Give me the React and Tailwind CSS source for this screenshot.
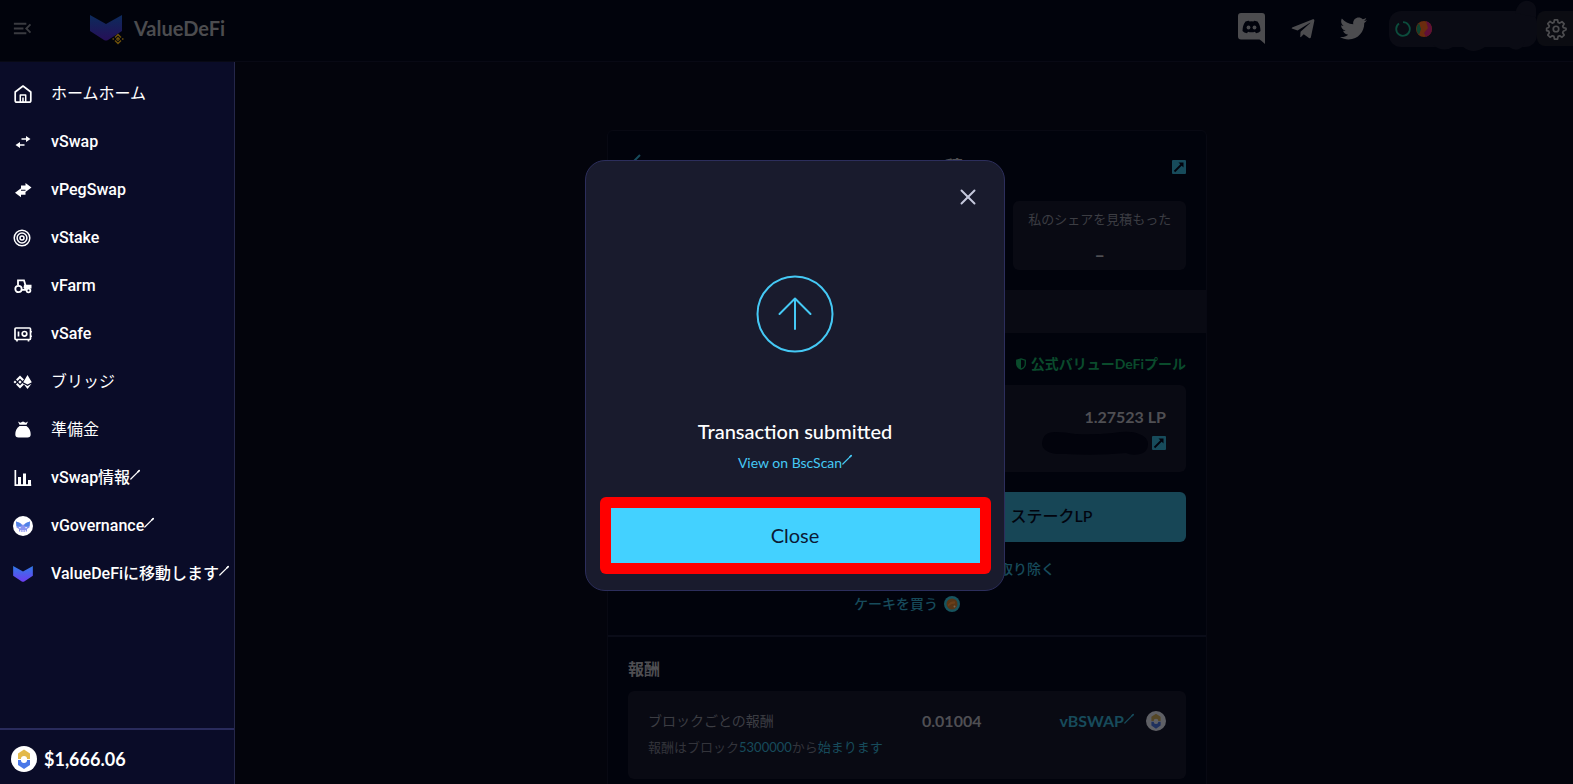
import React from 'react'
import { FaTelegramPlane, FaTwitter } from 'react-icons/fa'
import { MdMenuOpen } from 'react-icons/md'
import { X } from 'lucide-react'

const HomeIcon = () => (
  <svg viewBox="0 0 20 20" className="w-5 h-5" fill="none" stroke="currentColor" strokeWidth="1.700" strokeLinejoin="round">
    <path d="M4 18.200q-1.800 0-1.800-1.800V8L10 2l7.800 6v8.400q0 1.800-1.800 1.800z" />
    <path d="M7.300 18v-7h5.400v7M10 13.500V18" strokeWidth="1.500" />
  </svg>
)

const SwapIcon = () => (
  <svg viewBox="0 0 20 20" className="w-5 h-5" fill="currentColor">
    <path d="M8.500 6.300H13V4l4.500 3-4.500 3V7.800H8.500zM11.500 12.300H7V10l-4.500 3L7 16v-2.200h4.500z" />
  </svg>
)

const PegSwapIcon = () => (
  <svg viewBox="0 0 20 20" className="w-5 h-5" fill="currentColor">
    <path d="M8 5.500h4.500V3L18.500 7.500l-6 4.500V9.700H8zM12.500 10.800v4H8v2.500l-6-4.500 6-4.500v2.500z" />
  </svg>
)

const StakeIcon = () => (
  <svg viewBox="0 0 20 20" className="w-5 h-5" fill="none" stroke="currentColor" strokeWidth="1.500">
    <circle cx="9" cy="10" r="7.800" />
    <circle cx="9" cy="10" r="4.900" />
    <circle cx="9" cy="10" r="2" />
  </svg>
)

const FarmIcon = () => (
  <svg viewBox="0 0 20 20" className="w-5 h-5" fill="none" stroke="currentColor" strokeWidth="1.800">
    <circle cx="5.500" cy="13" r="3.200" />
    <circle cx="15.500" cy="14.500" r="1.900" />
    <path d="M5 9V4.300h6l1.500 5.200M9 13.800h4" />
    <path d="M11 8.800h7.500v3.700H14L12.500 14 10.500 12z" fill="currentColor" stroke="none" />
  </svg>
)

const SafeIcon = () => (
  <svg viewBox="0 0 20 20" className="w-5 h-5" fill="none" stroke="currentColor" strokeWidth="1.700">
    <rect x="2" y="4" width="15.500" height="11.500" rx="1" />
    <circle cx="11.500" cy="9.800" r="2.300" />
    <path d="M5.500 7.500v5M4 15.500v2M15.500 15.500v2M18 7v1.500M18 11.500v1.500" />
  </svg>
)

const BridgeIcon = () => (
  <svg viewBox="0 0 20 20" className="w-5 h-5" fill="currentColor">
    <path d="M7 3.500 11 7.500 9.500 9 7 6.500 4.500 9 3 7.500zM7 16.500l-4-4L4.500 11 7 13.500 9.500 11l1.500 1.500zM7 8.300 8.700 10 7 11.700 5.300 10zM2 8.500 3.500 10 2 11.500.5 10zM14.500 3l4.300 7.200-4.300 2.200-4.300-2.200zM10.500 11.800l4 2.100 4-2.100-4 5.200z" />
  </svg>
)

const BagIcon = () => (
  <svg viewBox="0 0 20 20" className="w-5 h-5" fill="currentColor">
    <path d="m5 1.500 2.300 1.200L10 1.500l2.700 1.200L15 1.500l-1.500 3.300h-7zM6.500 6h7c3 2 4.200 5.200 4.200 8.200 0 2.200-1 3.300-3.200 3.300h-9c-2.200 0-3.200-1.100-3.200-3.300C2.300 11.200 3.500 8 6.500 6z" />
  </svg>
)

const ChartIcon = () => (
  <svg viewBox="0 0 20 20" className="w-5 h-5" fill="currentColor">
    <path d="M1.500 2h1.700v14.300h15V18H1.500zM5 9h3v7.500H5zM10 5.500h3v11h-3zM15 12h3v5h-3z" />
  </svg>
)

const GovernanceIcon = () => (
  <svg viewBox="0 0 20 20" className="w-5 h-5">
    <circle cx="10" cy="10" r="10" fill="#fff" />
    <path d="M3 5.500 7 7l3 2 3-2 4-1.500-.5 6L14 13v2.500h-1.300V14h-1v2h-1.200v-2h-1v2H8.300v-2h-1v1.500H6V13l-2.500-1.500z" fill="#8a93f0" />
    <path d="m3 5.500 4 1.500 2 2.500-3 1.500-2.500-1zM17 5.500 13 7l-2 2.500 3 1.500 2.500-1z" fill="#4f83e6" />
    <path d="m5.500 10.500 2.500 1-1 1zM14.500 10.500l-2.500 1 1 1z" fill="#fff" />
  </svg>
)

const ValueLogo = ({ className, dim }) => (
  <svg viewBox="0 0 32 26" className={className}>
    <defs>
      <linearGradient id={dim ? 'logoDim' : 'logo'} x1="0" y1="0" x2="0" y2="1">
        <stop offset="0" stopColor={dim ? '#0c2b5c' : '#2f7be8'} />
        <stop offset="1" stopColor={dim ? '#260f57' : '#6d3df0'} />
      </linearGradient>
    </defs>
    <path d="M0 0 16 9 32 0v16L18 25q-2 1.200-4 0L0 16z" fill={dim ? 'url(#logoDim)' : 'url(#logo)'} />
  </svg>
)

const BnbBadge = () => (
  <svg viewBox="0 0 12 12" className="absolute left-[22px] top-[18px] w-3 h-3" fill="none" stroke="#6b4f0b" strokeWidth="1.500">
    <path d="M3 4.500 6 1.500l3 3M3 7.500l3 3 3-3M6 4.800 7.200 6 6 7.200 4.800 6zM.5 6h1.600M9.900 6h1.600" />
  </svg>
)

const DiscordIcon = () => (
  <svg viewBox="0 0 28 31" className="w-7 h-[31px]" fill="currentColor">
    <path d="M3 0h21q3 0 3 3v28l-4-3.500-1.500-1H3q-3 0-3-3V3q0-3 3-3z" />
    <path d="M7.500 8.500Q10 7.500 11 7.700l.5.700q2-.4 4 0l.5-.7q1 0 3.500.8 3 4 3 9.500-1.500 2-4.500 2.300l-1-1.500q-3.500 1-7 0l-1 1.500Q6 20 4.500 18q0-5.500 3-9.500z" fill="#01030c" />
    <circle cx="10.500" cy="14.500" r="1.900" />
    <circle cx="16.500" cy="14.500" r="1.900" />
  </svg>
)

const GearIcon = () => (
  <svg viewBox="0 0 24 24" className="w-[22px] h-[22px]" fill="none" stroke="currentColor" strokeWidth="1.900" strokeLinejoin="round">
    <circle cx="12" cy="12" r="3" />
    <path d="M10.300 2h3.400l.6 2.900 1.700.7 2.500-1.600 2.400 2.400-1.600 2.500.7 1.700 2.900.6v1.700l-2.900 1.500-.7 1.700 1.600 2.500-2.400 2.400-2.500-1.600-1.700.7-.6 2.900h-3.400l-.6-2.900-1.700-.7-2.500 1.600-2.400-2.400 1.600-2.500-.7-1.700L1.800 13.800v-2.600l2.200-.8.700-1.700-1.600-2.500 2.400-2.400L8 5.600l1.700-.7z" />
  </svg>
)

const CoinIcon = ({ className }) => (
  <svg viewBox="0 0 26 26" className={className}>
    <circle cx="13" cy="13" r="13" fill="#fff" />
    <path d="M7 7.500 13 3.500l6 4V13h-3a3 3 0 0 0-6 0H7z" fill="#e3b94a" />
    <path d="M7 14h3a3 3 0 0 0 6 0h3v5l-6 4-6-4z" fill="#4a78e8" />
    <circle cx="13" cy="13.500" r="2.800" fill="#fff" />
  </svg>
)

const CakeIcon = () => (
  <svg viewBox="0 0 16 16" className="w-4 h-4">
    <circle cx="8" cy="8" r="8" fill="#17545e" />
    <circle cx="8" cy="8" r="5.500" fill="#573516" />
    <path d="M4 8.500q3-4 7-3v2q-4 0-7 3z" fill="#6a3f1a" />
    <circle cx="10.500" cy="10.500" r="1" fill="#6f6353" />
  </svg>
)

const OpenBox = () => (
  <svg viewBox="0 0 14 14" className="w-[14px] h-[14px]">
    <rect width="14" height="14" rx="1" fill="#174b5b" />
    <path d="M2.500 11.500 9.500 4.500" stroke="#02030d" strokeWidth="1.800" />
    <path d="M6.500 2.500h5v5z" fill="#02030d" />
  </svg>
)

const Arrow = () => (
  <svg viewBox="0 0 10 12" className="inline-block w-[10px] h-3 align-[2px]" fill="none" stroke="currentColor" strokeLinecap="round">
    <path d="M.8 10 9 1.800" strokeWidth="1.200" />
    <path d="M8 2.800 9.200 1.600" strokeWidth="1.600" />
  </svg>
)

const links = [
  { name: 'ホームホーム', icon: <HomeIcon /> },
  { name: 'vSwap', icon: <SwapIcon /> },
  { name: 'vPegSwap', icon: <PegSwapIcon /> },
  { name: 'vStake', icon: <StakeIcon /> },
  { name: 'vFarm', icon: <FarmIcon /> },
  { name: 'vSafe', icon: <SafeIcon /> },
  { name: 'ブリッジ', icon: <BridgeIcon /> },
  { name: '準備金', icon: <BagIcon /> },
  { name: 'vSwap情報', icon: <ChartIcon />, external: true },
  { name: 'vGovernance', icon: <GovernanceIcon />, external: true },
  { name: 'ValueDeFiに移動します', icon: <ValueLogo className="w-5 h-4" />, external: true },
]

const Header = () => (
  <header className="h-[62px] shrink-0 flex items-center justify-between border-b border-[#080914] bg-[#01030c] pb-1 text-[#4c4c4f]">
    <div className="flex items-center pl-[11px]">
      <button aria-label="Menu" className="text-[#3a3b40]">
        <MdMenuOpen size={23} />
      </button>
      <a href="#" className="ml-14 flex items-center gap-3 pb-[2px]">
        <span className="relative">
          <ValueLogo className="w-8 h-[26px]" dim />
          <BnbBadge />
        </span>
        <span className="text-xl font-bold">ValueDeFi</span>
      </a>
    </div>
    <div className="flex items-center">
      <a href="#" aria-label="Discord"><DiscordIcon /></a>
      <a href="#" aria-label="Telegram" className="ml-6"><FaTelegramPlane size={26} /></a>
      <a href="#" aria-label="Twitter" className="ml-6"><FaTwitter size={27} /></a>
      <div className="relative ml-[22px] flex h-9 w-[148px] items-center gap-[5px] rounded-xl bg-[#0a0b14] pl-[6px]">
        <svg viewBox="0 0 147 60" className="absolute left-0 -top-3 w-[147px] h-[60px]" fill="#0a0b14">
          <path d="M126 14q4-14 14-12 9 2 7 16zM44 46q10 8 20 2h10q10 8 22 0h24q8 6 14-1l2-6H44z" />
        </svg>
        <svg viewBox="0 0 16 16" className="relative w-4 h-4" fill="none" stroke="#0c4c3c" strokeWidth="1.800">
          <path d="M4 2.500A6.800 6.800 0 1 0 8 1.200" />
        </svg>
        <svg viewBox="0 0 16 16" className="relative w-4 h-4">
          <circle cx="8" cy="8" r="8" fill="#6b2c0e" />
          <path d="M10 .3a8 8 0 0 1 0 15.400L8 12l4-5z" fill="#5f0f38" />
          <path d="M3 2Q-2 8 3 14l2-6z" fill="#0e4230" />
        </svg>
      </div>
      <button aria-label="Settings" className="flex h-[35px] w-9 items-center justify-center rounded-l-lg bg-[#0b0c12] pl-[2px]">
        <GearIcon />
      </button>
    </div>
  </header>
)

const Sidebar = () => (
  <aside className="flex w-[235px] shrink-0 flex-col border-r border-[#25274a] bg-[#0a0c28] text-white">
    <nav className="flex flex-1 flex-col pt-2 font-[Roboto,'Noto_Sans_CJK_JP',sans-serif] text-base font-medium">
      {links.map((link) => (
        <a key={link.name} href="#" className="flex h-12 items-center gap-[18px] whitespace-nowrap pl-[13px]">
          {link.icon}
          <span className={/^[a-z]/i.test(link.name) ? '' : 'font-normal'}>
            {link.name}
            {link.external && <Arrow />}
          </span>
        </a>
      ))}
    </nav>
    <div className="flex h-14 items-center gap-[7px] border-t-2 border-[#292b5c] pl-[11px] pt-1">
      <CoinIcon className="w-[26px] h-[26px]" />
      <span className="text-lg font-bold">$1,666.06</span>
    </div>
  </aside>
)

const Stat = ({ label, value }) => (
  <div className="flex h-[69px] flex-col items-center justify-between rounded-md bg-[#090a13] pt-2 pb-[5px]">
    <span className="text-[13px] leading-5 text-[#3c3d43]">{label}</span>
    <span className="text-lg leading-5 font-bold">{value}</span>
  </div>
)

const FarmCard = () => (
  <section className="w-[600px] self-start rounded-md border border-[#080913] bg-[#01030c] text-[#4f4f53]">
    <div className="px-5">
      <div className="flex h-[70px] items-center justify-between pt-[2px]">
        <button aria-label="Back" className="pb-2 text-[#174b5b]">
          <svg viewBox="0 0 20 20" className="w-5 h-5" fill="none" stroke="currentColor" strokeWidth="2">
            <path d="M12 2 4 10l8 8" />
          </svg>
        </button>
        <h1 className="text-lg font-bold">Cafe CAKE積</h1>
        <a href="#" aria-label="Open pool"><OpenBox /></a>
      </div>
      <div className="grid grid-cols-3 gap-5">
        <Stat label="毎日" value="–" />
        <Stat label="総流動性" value="–" />
        <Stat label="私のシェアを見積もった" value="–" />
      </div>
    </div>
    <div className="mt-5 h-[43px] bg-[#090a13]"></div>
    <div className="px-5">
      <div className="flex h-[52px] items-center justify-end gap-1 pt-[10px] text-sm font-bold text-[#0a4b2c]">
        <svg viewBox="0 0 12 14" className="w-3 h-3">
          <path d="M6 1 11 2.500V7q0 4-5 6-5-2-5-6V2.500z" fill="none" stroke="currentColor" strokeWidth="1.500" />
          <path d="M6 1v12Q1 11 1 7V2.500z" fill="currentColor" />
        </svg>
        <span>公式バリューDeFiプール</span>
      </div>
      <div className="flex h-[87px] flex-col items-end rounded-md bg-[#090a13] px-5 pt-5">
        <span className="text-base leading-6 font-bold">1.27523 LP</span>
        <span className="mt-[2px] flex items-center gap-1">
          <svg viewBox="0 0 108 24" className="w-[108px] h-6" fill="#02030c">
            <path d="M2 12Q3 1 15 1q10 0 20 2 20 1 38-1 18-3 26 1 9 3 9 10 0 8-8 10-8 2-14-1-30 3-60 1Q2 24 2 12z" />
          </svg>
          <a href="#" aria-label="Open wallet"><OpenBox /></a>
        </span>
      </div>
      <div className="mt-5 grid grid-cols-2 gap-5 text-base font-medium text-[#02040e]">
        <button className="h-[50px] rounded-md bg-[#174656] pb-[2px]">請求</button>
        <button className="h-[50px] rounded-md bg-[#174656] pb-[2px]">ステークLP</button>
      </div>
      <div className="mt-4 flex justify-center gap-[72px] text-sm leading-[22px] font-medium text-[#174b5b]">
        <a href="#">流動性を追加する</a>
        <a href="#">流動性を取り除く</a>
      </div>
      <a href="#" className="mt-[13px] flex items-center justify-center gap-[6px] text-sm leading-[22px] font-medium text-[#174b5b]">
        ケーキを買う
        <CakeIcon />
      </a>
    </div>
    <div className="mt-5 border-t-2 border-[#0a0c18] px-5 pb-5">
      <h2 className="pt-5 text-base leading-6 font-bold">報酬</h2>
      <div className="mt-[10px] h-[88px] rounded-md bg-[#090a13] px-5 pt-[18px]">
        <div className="flex items-center leading-6">
          <span className="w-[274px] text-sm text-[#3c3d43]">ブロックごとの報酬</span>
          <span className="font-bold">0.01004</span>
          <a href="#" className="ml-auto font-bold text-[#174b5b]">vBSWAP<Arrow /></a>
          <CoinIcon className="ml-3 w-5 h-5 opacity-35" />
        </div>
        <p className="mt-[2px] text-[13px] leading-6 text-[#33343b]">
          報酬はブロック<a href="#" className="text-[#174b5b]">5300000</a>から<a href="#" className="text-[#174b5b]">始まります</a>
        </p>
      </div>
    </div>
  </section>
)

const TransactionModal = () => (
  <div className="fixed inset-0 flex items-start justify-center pl-4 pt-[160px]">
    <div role="dialog" aria-label="Transaction submitted" className="flex w-[420px] flex-col rounded-[20px] border border-[#2c2e5c] bg-[#191b2d] pl-[14px] pr-[13px] pb-4">
      <button aria-label="Dismiss" className="mt-[23px] mr-[10px] self-end text-[#c5c8dc]">
        <X size={26} strokeWidth={1.8} />
      </button>
      <svg viewBox="0 0 78 78" className="mt-[65px] w-[78px] h-[78px] self-center" fill="none" stroke="#45c9f5" strokeWidth="2" strokeLinecap="round" strokeLinejoin="round">
        <circle cx="39" cy="39" r="37.500" />
        <path d="M39 54V24M23.500 39 39 23.500 54.500 39" />
      </svg>
      <p className="mt-16 text-center text-xl leading-7 font-medium text-white">Transaction submitted</p>
      <a href="#" className="mt-2 self-center text-sm leading-5 text-[#45c9f5]">View on BscScan<Arrow /></a>
      <div className="mt-6 rounded-md bg-[#ff0000] p-[11px]">
        <button className="h-[55px] w-full bg-[#43d1ff] pb-[2px] text-xl text-[#0b1a35]">Close</button>
      </div>
    </div>
  </div>
)

const App = () => {
  return (
    <div className="flex h-screen flex-col overflow-hidden bg-[#03040c] font-[Lato,'Noto_Sans_CJK_JP',sans-serif]">
      <Header />
      <div className="flex min-h-0 flex-1">
        <Sidebar />
        <main className="flex flex-1 justify-center overflow-hidden pl-[6px] pt-[68px]">
          <FarmCard />
        </main>
      </div>
      <TransactionModal />
    </div>
  )
}

export default App
